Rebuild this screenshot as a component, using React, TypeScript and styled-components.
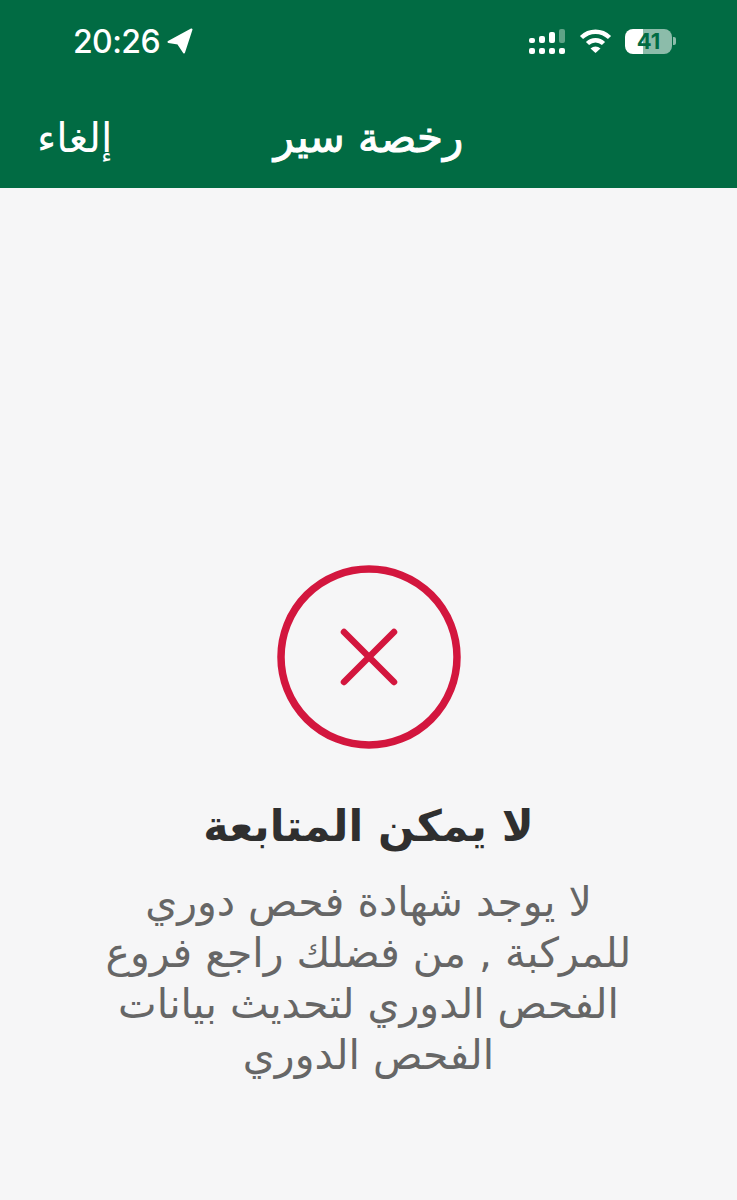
import React from 'react';
import styled, { createGlobalStyle } from 'styled-components';

const GlobalStyle = createGlobalStyle`
  html, body {
    margin: 0;
    padding: 0;
    background: #f6f6f7;
  }
  body {
    font-family: "DejaVu Sans", "Noto Sans", sans-serif;
  }
`;

const Page = styled.div`
  display: flex;
  flex-direction: column;
  width: 737px;
  height: 1200px;
  overflow: hidden;
`;

const Header = styled.header`
  display: flex;
  flex-direction: column;
  height: 188px;
  background: #016b43;
  color: #fff;
`;

const StatusBar = styled.div`
  display: flex;
  align-items: center;
  justify-content: space-between;
  height: 82px;
  padding: 0 61px 0 73px;
`;

const StatusGroup = styled.div<{ $gap: number }>`
  display: flex;
  align-items: center;
  gap: ${(p) => p.$gap}px;
`;

const Clock = styled.span`
  font-family: Inter, "Liberation Sans", sans-serif;
  font-size: 32px;
  font-weight: 500;
  letter-spacing: -0.6px;
`;

const BatteryWrap = styled.div`
  display: flex;
  align-items: center;
  gap: 1px;
`;

const Battery = styled.div`
  width: 47px;
  height: 25px;
  border-radius: 8px;
  background: linear-gradient(90deg, #fff 0 38%, rgba(255, 255, 255, 0.55) 38% 100%);
  color: #016b43;
  font-family: Inter, "Liberation Sans", sans-serif;
  font-size: 22px;
  font-weight: 700;
  line-height: 25px;
  text-align: center;
`;

const BatteryTip = styled.div`
  width: 3px;
  height: 8px;
  border-radius: 0 2px 2px 0;
  background: rgba(255, 255, 255, 0.55);
`;

const NavBar = styled.nav`
  display: grid;
  grid-template-columns: 1fr auto 1fr;
  align-items: center;
  height: 106px;
  padding: 6px 37px 0;
  box-sizing: border-box;
  direction: ltr;
`;

const CancelLabel = styled.span`
  justify-self: start;
  font-size: 41px;
  direction: rtl;
  line-height: 1;
`;

const Title = styled.h1`
  margin: 0;
  font-size: 42px;
  font-weight: 400;
  -webkit-text-stroke: 1px #fff;
  direction: rtl;
  line-height: 1;
`;

const Content = styled.main`
  flex: 1;
  display: flex;
  flex-direction: column;
  align-items: center;
  padding: 377px 100px 0;
  direction: rtl;
  text-align: center;
`;

const Heading = styled.h2`
  margin: 45px 0 0;
  font-size: 43px;
  font-weight: 700;
  line-height: 64px;
  color: #2f2f2f;
`;

const Message = styled.p`
  margin: 19px 0 0;
  font-size: 41px;
  line-height: 51px;
  color: #666666;
`;

const SignalIcon = () => (
  <svg width="37" height="25" viewBox="0 0 37 25" fill="#fff">
    <rect x="0" y="9" width="6" height="5" rx="2" />
    <rect x="10" y="7" width="6" height="7" rx="2" />
    <rect x="20" y="3" width="6" height="11" rx="2" />
    <rect x="30" y="0" width="6" height="14" rx="2" fill="#5fa387" />
    <rect x="0" y="19" width="6" height="6" rx="2" />
    <rect x="10" y="19" width="6" height="6" rx="2" />
    <rect x="20" y="19" width="6" height="6" rx="2" />
    <rect x="30" y="19" width="6" height="6" rx="2" />
  </svg>
);

const WifiIcon = () => (
  <svg width="33" height="24" viewBox="0 0 33 24" fill="none" stroke="#fff" strokeWidth="4.5">
    <path d="M2.5 8.5C10.5 0.8 22.5 0.8 30.5 8.5" />
    <path d="M8.5 14.5C13 10 20 10 24.5 14.5" />
    <path d="M16.5 24L11.5 19.5C14.5 16.8 18.5 16.8 21.5 19.5Z" fill="#fff" stroke="none" />
  </svg>
);

const LocationIcon = () => (
  <svg width="26" height="26" viewBox="0 0 26 26" fill="#fff" stroke="#fff" strokeWidth="2" strokeLinejoin="round">
    <path d="M24.5 1.5L17 24.5L11 15.5L1.5 14Z" />
  </svg>
);

const ErrorIcon = () => (
  <svg width="184" height="184" viewBox="0 0 184 184" fill="none" stroke="#d3163e" strokeLinecap="round">
    <circle cx="92" cy="92" r="88" strokeWidth="7.5" />
    <path d="M67 67L117 117M117 67L67 117" strokeWidth="6.5" />
  </svg>
);

export default function App() {
  return (
    <Page>
      <GlobalStyle />
      <Header>
        <StatusBar>
          <StatusGroup $gap={7}>
            <Clock>20:26</Clock>
            <LocationIcon />
          </StatusGroup>
          <StatusGroup $gap={13}>
            <SignalIcon />
            <WifiIcon />
            <BatteryWrap>
              <Battery>41</Battery>
              <BatteryTip />
            </BatteryWrap>
          </StatusGroup>
        </StatusBar>
        <NavBar>
          <CancelLabel>إلغاء</CancelLabel>
          <Title>رخصة سير</Title>
        </NavBar>
      </Header>
      <Content>
        <ErrorIcon />
        <Heading>لا يمكن المتابعة</Heading>
        <Message>
          لا يوجد شهادة فحص دوري للمركبة , من فضلك راجع فروع الفحص الدوري لتحديث بيانات الفحص الدوري
        </Message>
      </Content>
    </Page>
  );
}
